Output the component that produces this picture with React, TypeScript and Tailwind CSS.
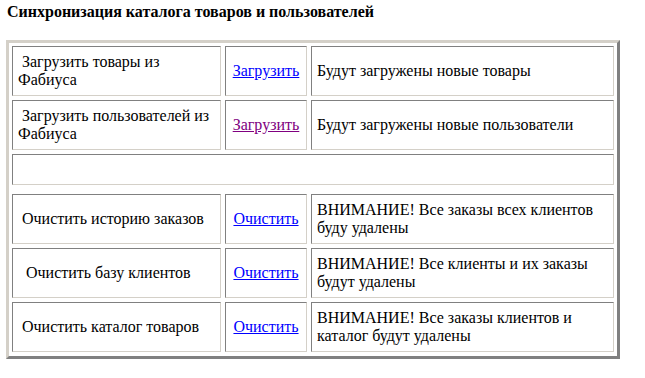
import React from 'react';

const cell = 'flex items-center border border-t-[#808080] border-l-[#808080] border-r-[#d4d0c8] border-b-[#d4d0c8] h-[50px] px-[5px] leading-[18px]';

type Row = { action: React.ReactNode; link: string; visited?: boolean; note: React.ReactNode };

const loadRows: Row[] = [
  {
    action: (<>&nbsp;Загрузить товары из<br />Фабиуса</>),
    link: 'Загрузить',
    note: 'Будут загружены новые товары',
  },
  {
    action: (<>&nbsp;Загрузить пользователей из<br />Фабиуса</>),
    link: 'Загрузить',
    visited: true,
    note: 'Будут загружены новые пользователи',
  },
];

const clearRows: Row[] = [
  {
    action: <>&nbsp;Очистить историю заказов</>,
    link: 'Очистить',
    note: (<>ВНИМАНИЕ! Все заказы всех клиентов<br />буду удалены</>),
  },
  {
    action: <>&nbsp;&nbsp;Очистить базу клиентов</>,
    link: 'Очистить',
    note: (<>ВНИМАНИЕ! Все клиенты и их заказы<br />будут удалены</>),
  },
  {
    action: <>&nbsp;Очистить каталог товаров</>,
    link: 'Очистить',
    note: (<>ВНИМАНИЕ! Все заказы клиентов и<br />каталог будут удалены</>),
  },
];

const RowCells = ({ row }: { row: Row }) => (
  <>
    <div className={cell}>
      <div>{row.action}</div>
    </div>
    <div className={`${cell} justify-center`}>
      <a href="#" className={`underline ${row.visited ? 'text-[#800080]' : 'text-[#0000ff]'}`}>
        {row.link}
      </a>
    </div>
    <div className={cell}>
      <div>{row.note}</div>
    </div>
  </>
);

export default function App() {
  return (
    <div className="min-h-screen bg-white text-black [font-family:'Liberation_Serif',serif] text-[16px]">
      <div className="h-[40px] pl-[7px] pt-[3px] text-[16px] font-bold leading-[18px]">
        Синхронизация каталога товаров и пользователей
      </div>

      {/* Sync table */}
      <div className="ml-[6px] w-[614px] border-[3px] border-t-[#d4d0c8] border-l-[#d4d0c8] border-r-[#808080] border-b-[#808080] p-[3px] pb-[4px] grid grid-cols-[209px_82px_303px] gap-[4px]">
        {loadRows.map((r, i) => (
          <RowCells key={'l' + i} row={r} />
        ))}
        <div className="col-span-3 h-[31px] mb-[5px] border border-t-[#808080] border-l-[#808080] border-r-[#d4d0c8] border-b-[#d4d0c8]"></div>
        {clearRows.map((r, i) => (
          <RowCells key={'c' + i} row={r} />
        ))}
      </div>
    </div>
  );
}
